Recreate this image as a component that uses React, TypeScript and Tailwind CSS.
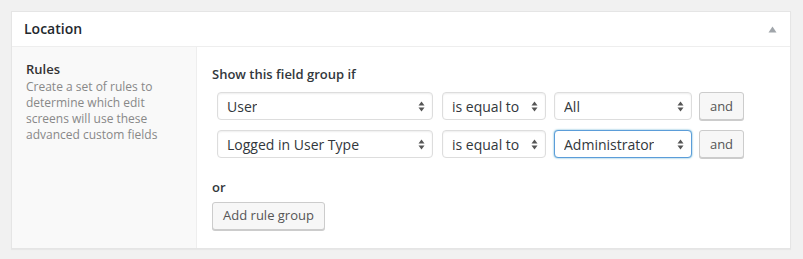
import React from "react";

type SelectProps = { value: string; width: string; focused?: boolean };

function UpDown() {
  return (
    <svg width="7" height="11" viewBox="0 0 7 11" className="shrink-0">
      <path d="M3.5 0.5 L6.5 4.5 L0.5 4.5 Z" fill="#555" />
      <path d="M3.5 10.5 L6.5 6.5 L0.5 6.5 Z" fill="#555" />
    </svg>
  );
}

function FakeSelect({ value, width, focused }: SelectProps) {
  return (
    <div
      className={`${width} h-[28px] flex items-center justify-between rounded-[4px] border bg-white pl-[9px] pr-[7px] text-[14px] text-[#32373c] ${
        focused
          ? "border-[#5b9dd9] shadow-[0_0_2px_rgba(30,140,190,0.8)]"
          : "border-[#ddd] shadow-[inset_0_1px_2px_rgba(0,0,0,0.07)]"
      }`}
    >
      <span className="truncate">{value}</span>
      <UpDown />
    </div>
  );
}

function AndButton() {
  return (
    <button className="w-[45px] h-[28px] rounded-[3px] border border-[#ccc] bg-[#f7f7f7] text-[13px] text-[#555] shadow-[0_1px_0_#ccc] leading-none">
      and
    </button>
  );
}

const rules = [
  { param: "User", value: "All" },
  { param: "Logged in User Type", value: "Administrator", focused: true },
];

export default function App() {
  return (
    <div className="min-h-[259px] bg-[#f1f1f1] pt-[11px] font-['Open_Sans',sans-serif]">
      <div className="ml-[11px] w-[780px] h-[238px] border border-[#e5e5e5] bg-white shadow-[0_1px_1px_rgba(0,0,0,0.04)] flex flex-col">
        <div className="h-[35px] shrink-0 border-b border-[#eee] flex items-center justify-between pl-[12px] pr-[12px]">
          <h2 className="text-[14px] leading-[20px] font-semibold text-[#23282d]">Location</h2>
          <svg width="9" height="7" viewBox="0 0 9 7" className="mr-[1px]">
            <path d="M4.5 0.5 L8.5 6.5 L0.5 6.5 Z" fill="#a0a5aa" />
          </svg>
        </div>
        <div className="flex flex-1">
          <div className="w-[185px] shrink-0 border-r border-[#eee] bg-[#f9f9f9] pl-[14px] pr-[10px] pt-[13px]">
            <div className="text-[13px] leading-[18px] font-semibold text-[#333]">Rules</div>
            <p className="mt-[1px] text-[12px] leading-[16px] text-[#888]">
              Create a set of rules to determine which edit screens will use these advanced custom fields
            </p>
          </div>
          <div className="flex-1 pl-[15px] pt-[17px]">
            <h4 className="text-[13px] leading-[20px] font-semibold text-[#32373c]">Show this field group if</h4>
            <div className="mt-[8px] flex flex-col gap-[10px] pl-[5px]">
              {rules.map((rule) => (
                <div key={rule.param} className="flex items-center">
                  <FakeSelect value={rule.param} width="w-[216px]" />
                  <div className="ml-[9px]">
                    <FakeSelect value="is equal to" width="w-[104px]" />
                  </div>
                  <div className="ml-[8px]">
                    <FakeSelect value={rule.value} width="w-[138px]" focused={rule.focused} />
                  </div>
                  <div className="ml-[7px]">
                    <AndButton />
                  </div>
                </div>
              ))}
            </div>
            <h4 className="mt-[19px] text-[13px] leading-[20px] font-semibold text-[#32373c]">or</h4>
            <button className="mt-[5px] w-[113px] h-[28px] rounded-[3px] border border-[#ccc] bg-[#f7f7f7] text-[13px] text-[#555] shadow-[0_1px_0_#ccc]">
              Add rule group
            </button>
          </div>
        </div>
      </div>
    </div>
  );
}
